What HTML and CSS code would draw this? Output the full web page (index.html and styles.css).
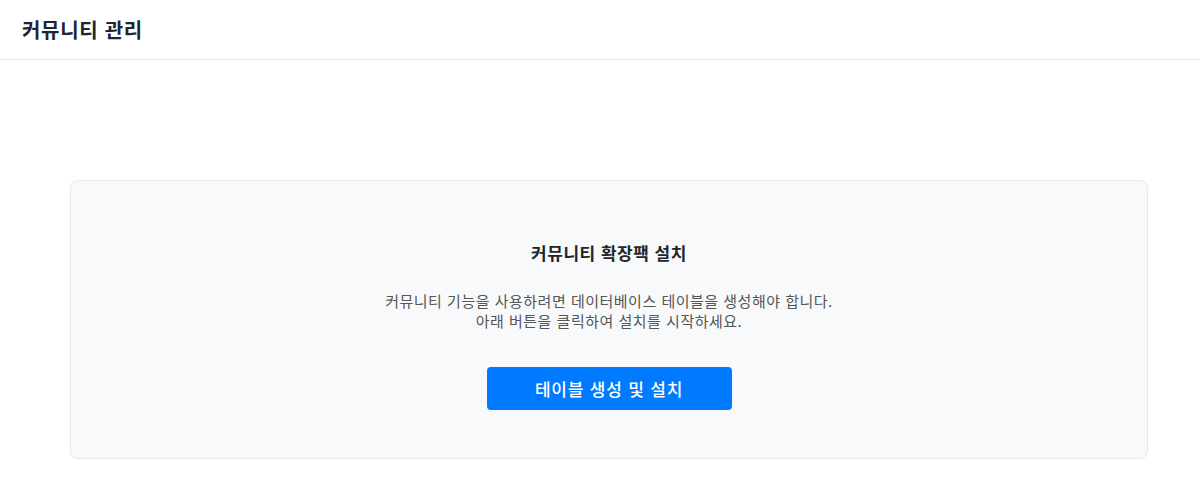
FILE: index.html
```html
<!DOCTYPE html>
<html lang="ko">

<head>
  <meta charset="UTF-8">
  <meta name="viewport" content="width=device-width, initial-scale=1.0">
  <title>커뮤니티 관리</title>
  <link rel="stylesheet" href="styles.css">
</head>

<body>
  <div class="header">
    <h2>커뮤니티 관리</h2>
  </div>
  <div class="content">
    <div class="install-card">
      <h3>커뮤니티 확장팩 설치</h3>
      <p>커뮤니티 기능을 사용하려면 데이터베이스 테이블을 생성해야 합니다.<br>아래 버튼을 클릭하여 설치를 시작하세요.</p>
      <button type="button" class="btn-install">테이블 생성 및 설치</button>
    </div>
  </div>
</body>

</html>
```

FILE: styles.css
```css
body {
  margin: 0;
  padding: 0;
  background-color: #fff;
  font-family: "Noto Sans CJK KR", "Noto Sans", sans-serif;
  color: #212529;
}

.header {
  height: 59px;
  padding: 0 22px;
  display: flex;
  align-items: center;
  border-bottom: 1px solid #e9ecef;
}

.header h2 {
  margin: 0;
  font-size: 20px;
  font-weight: 700;
  letter-spacing: 0.7px;
  color: #1f2533;
}

.content {
  padding: 120px 52px 0 70px;
}

.install-card {
  padding: 60px 20px 48px;
  background-color: #f8f9fa;
  border: 1px solid #e5e7eb;
  border-radius: 8px;
  text-align: center;
}

.install-card h3 {
  margin: 0;
  font-size: 17px;
  line-height: 24px;
  font-weight: 700;
  letter-spacing: 0.5px;
  color: #212529;
}

.install-card p {
  margin: 26px 0 36px;
  font-size: 15px;
  line-height: 20px;
  letter-spacing: 0.5px;
  color: #555;
}

.btn-install {
  width: 245px;
  height: 43px;
  border: none;
  border-radius: 4px;
  background-color: #007bff;
  color: #fff;
  font-family: inherit;
  font-size: 17px;
  font-weight: 500;
  letter-spacing: 0.8px;
  cursor: pointer;
}
```
